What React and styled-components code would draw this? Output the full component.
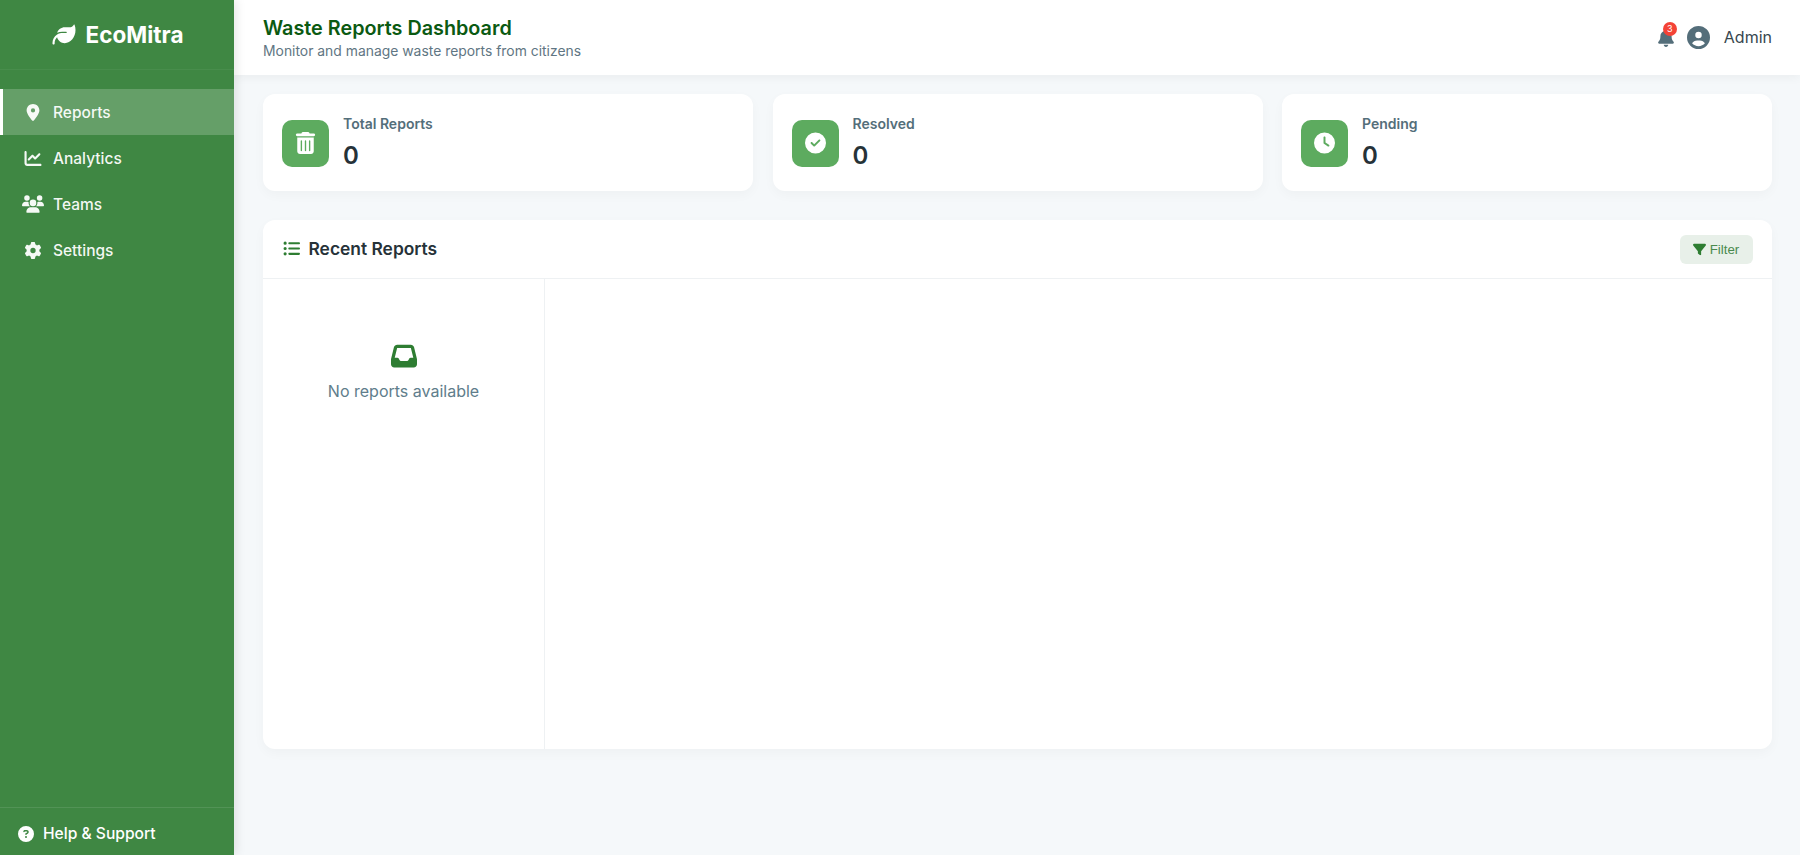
import React from "react";
import styled, { createGlobalStyle } from "styled-components";
import {
  FaBell,
  FaChartLine,
  FaCircleCheck,
  FaCircleQuestion,
  FaCircleUser,
  FaClock,
  FaFilter,
  FaGear,
  FaInbox,
  FaLeaf,
  FaListUl,
  FaLocationDot,
  FaTrashCan,
  FaUsers,
} from "react-icons/fa6";

const navItems = [
  { label: "Reports", icon: FaLocationDot, active: true },
  { label: "Analytics", icon: FaChartLine },
  { label: "Teams", icon: FaUsers, wide: true },
  { label: "Settings", icon: FaGear },
];

const stats = [
  { label: "Total Reports", value: 0, icon: FaTrashCan },
  { label: "Resolved", value: 0, icon: FaCircleCheck },
  { label: "Pending", value: 0, icon: FaClock },
];

const App = () => {
  return (
    <Layout>
      <GlobalStyle />
      <Sidebar>
        <Brand>
          <FaLeaf />
          <span>EcoMitra</span>
        </Brand>
        <Nav>
          {navItems.map((item) => (
            <NavItem key={item.label} $active={item.active}>
              <NavIcon $wide={item.wide}>
                <item.icon />
              </NavIcon>
              {item.label}
            </NavItem>
          ))}
        </Nav>
        <Help>
          <FaCircleQuestion />
          Help &amp; Support
        </Help>
      </Sidebar>
      <Main>
        <Header>
          <div>
            <Title>Waste Reports Dashboard</Title>
            <Subtitle>Monitor and manage waste reports from citizens</Subtitle>
          </div>
          <HeaderRight>
            <BellWrap>
              <FaBell />
              <Badge>3</Badge>
            </BellWrap>
            <Avatar>
              <FaCircleUser />
            </Avatar>
            <AdminName>Admin</AdminName>
          </HeaderRight>
        </Header>
        <Content>
          <StatsGrid>
            {stats.map((stat) => (
              <StatCard key={stat.label}>
                <StatIcon>
                  <stat.icon />
                </StatIcon>
                <div>
                  <StatLabel>{stat.label}</StatLabel>
                  <StatValue>{stat.value}</StatValue>
                </div>
              </StatCard>
            ))}
          </StatsGrid>
          <Panel>
            <PanelHeader>
              <PanelTitle>
                <FaListUl />
                Recent Reports
              </PanelTitle>
              <FilterButton>
                <FaFilter />
                Filter
              </FilterButton>
            </PanelHeader>
            <PanelBody>
              <ReportList>
                <EmptyState>
                  <FaInbox />
                  <p>No reports available</p>
                </EmptyState>
              </ReportList>
            </PanelBody>
          </Panel>
        </Content>
      </Main>
    </Layout>
  );
};

const GlobalStyle = createGlobalStyle`
  * {
    box-sizing: border-box;
  }
  body {
    margin: 0;
    background: #f5f8fa;
    font-family: "Inter", "Noto Sans", "Liberation Sans", sans-serif;
  }
`;

const Layout = styled.div`
  display: flex;
  height: 855px;
  overflow: hidden;
`;

const Sidebar = styled.aside`
  width: 234px;
  flex-shrink: 0;
  display: flex;
  flex-direction: column;
  background: #3f8743;
  color: #fff;
  box-shadow: 2px 0 10px rgba(0, 0, 0, 0.1);
  z-index: 2;
`;

const Brand = styled.div`
  height: 70px;
  display: flex;
  align-items: center;
  justify-content: center;
  gap: 9px;
  padding-bottom: 1px;
  border-bottom: 1px solid rgba(255, 255, 255, 0.05);
  font-size: 22.5px;
  font-weight: 700;

  svg {
    width: 26px;
    height: 23px;
  }
`;

const Nav = styled.nav`
  flex: 1;
  padding-top: 19px;
`;

const NavItem = styled.div`
  height: 46px;
  display: flex;
  align-items: center;
  gap: 12px;
  padding-left: ${(p) => (p.$active ? "21px" : "24px")};
  font-size: 15.5px;
  font-weight: 500;
  color: rgba(255, 255, 255, 0.95);
  background: ${(p) => (p.$active ? "rgba(255,255,255,0.2)" : "transparent")};
  border-left: ${(p) => (p.$active ? "3px solid #fff" : "none")};
`;

const NavIcon = styled.span`
  width: 17px;
  display: flex;
  justify-content: center;

  svg {
    width: ${(p) => (p.$wide ? "22px" : "20px")};
    height: ${(p) => (p.$wide ? "18px" : "17px")};
    flex-shrink: 0;
  }
`;

const Help = styled.div`
  height: 48px;
  display: flex;
  align-items: center;
  gap: 9px;
  padding: 4px 0 0 18px;
  border-top: 1px solid rgba(255, 255, 255, 0.1);
  font-size: 15.6px;
  font-weight: 500;

  svg {
    width: 16px;
    height: 16px;
  }
`;

const Main = styled.main`
  flex: 1;
  display: flex;
  flex-direction: column;
  min-width: 0;
`;

const Header = styled.header`
  height: 75px;
  flex-shrink: 0;
  display: flex;
  align-items: center;
  justify-content: space-between;
  padding: 0 28px 0 29px;
  background: #fff;
  box-shadow: 0 2px 10px rgba(0, 0, 0, 0.05);
  z-index: 1;
`;

const Title = styled.h1`
  margin: 1px 0 0;
  font-size: 19.8px;
  line-height: 26px;
  font-weight: 600;
  color: #0b5a12;
`;

const Subtitle = styled.p`
  margin: 0;
  font-size: 13.9px;
  line-height: 20px;
  color: #5f7683;
`;

const HeaderRight = styled.div`
  display: flex;
  align-items: center;
`;

const BellWrap = styled.div`
  position: relative;
  display: flex;
  margin-right: 13px;
  color: #546e7a;

  svg {
    width: 16px;
    height: 18px;
  }
`;

const Badge = styled.span`
  position: absolute;
  top: -7px;
  right: -3px;
  width: 14px;
  height: 14px;
  border-radius: 50%;
  background: #f44336;
  color: #fff;
  font-size: 9px;
  line-height: 14px;
  text-align: center;
`;

const Avatar = styled.div`
  display: flex;
  margin-right: 14px;
  color: #546e7a;

  svg {
    width: 23px;
    height: 23px;
  }
`;

const AdminName = styled.span`
  margin-bottom: 2px;
  font-size: 16px;
  color: #37474f;
`;

const Content = styled.div`
  flex: 1;
  padding: 19px 28px 0 29px;
`;

const StatsGrid = styled.div`
  display: grid;
  grid-template-columns: repeat(3, 1fr);
  gap: 19.5px;
  margin-bottom: 29px;
`;

const StatCard = styled.div`
  height: 97px;
  display: flex;
  align-items: center;
  gap: 14px;
  padding: 0 19px;
  background: #fff;
  border-radius: 12px;
  box-shadow: 0 4px 12px rgba(0, 0, 0, 0.03);
`;

const StatIcon = styled.div`
  width: 47px;
  height: 47px;
  flex-shrink: 0;
  display: flex;
  align-items: center;
  justify-content: center;
  border-radius: 10px;
  background: #5dab5f;
  color: #fff;
  margin-top: 1px;

  svg {
    width: 21px;
    height: 22px;
  }
`;

const StatLabel = styled.div`
  font-size: 14px;
  line-height: 18px;
  font-weight: 600;
  color: #546e7a;
  margin-bottom: 8px;
`;

const StatValue = styled.div`
  font-size: 24px;
  line-height: 30px;
  font-weight: 600;
  color: #263238;
`;

const Panel = styled.section`
  height: 529px;
  display: flex;
  flex-direction: column;
  background: #fff;
  border-radius: 12px;
  box-shadow: 0 4px 12px rgba(0, 0, 0, 0.03);
`;

const PanelHeader = styled.div`
  height: 59px;
  flex-shrink: 0;
  display: flex;
  align-items: center;
  justify-content: space-between;
  padding: 0 19.5px;
  border-bottom: 1px solid #eef1f3;
`;

const PanelTitle = styled.h2`
  margin: 0 0 2px;
  display: flex;
  align-items: center;
  gap: 9px;
  font-size: 17.4px;
  font-weight: 600;
  color: #263238;

  svg {
    width: 17px;
    height: 17px;
    color: #2e7d32;
  }
`;

const FilterButton = styled.button`
  width: 73px;
  height: 29px;
  display: flex;
  align-items: center;
  justify-content: center;
  gap: 4px;
  padding: 0;
  border: none;
  border-radius: 6px;
  background: #e8f0e9;
  color: #4a8a4e;
  font-family: "Liberation Sans", Arial, sans-serif;
  font-size: 13.3px;

  svg {
    width: 13px;
    height: 13px;
    color: #2e7d32;
  }
`;

const PanelBody = styled.div`
  flex: 1;
  display: flex;
`;

const ReportList = styled.div`
  width: 282px;
  border-right: 1px solid #eef1f3;
`;

const EmptyState = styled.div`
  padding-top: 64px;
  text-align: center;
  color: #2e7d32;

  svg {
    display: block;
    width: 30px;
    height: 26px;
    margin: 0 auto 11px;
  }

  p {
    margin: 0;
    font-size: 16px;
    line-height: 22px;
    color: #607d8b;
  }
`;

export default App;
